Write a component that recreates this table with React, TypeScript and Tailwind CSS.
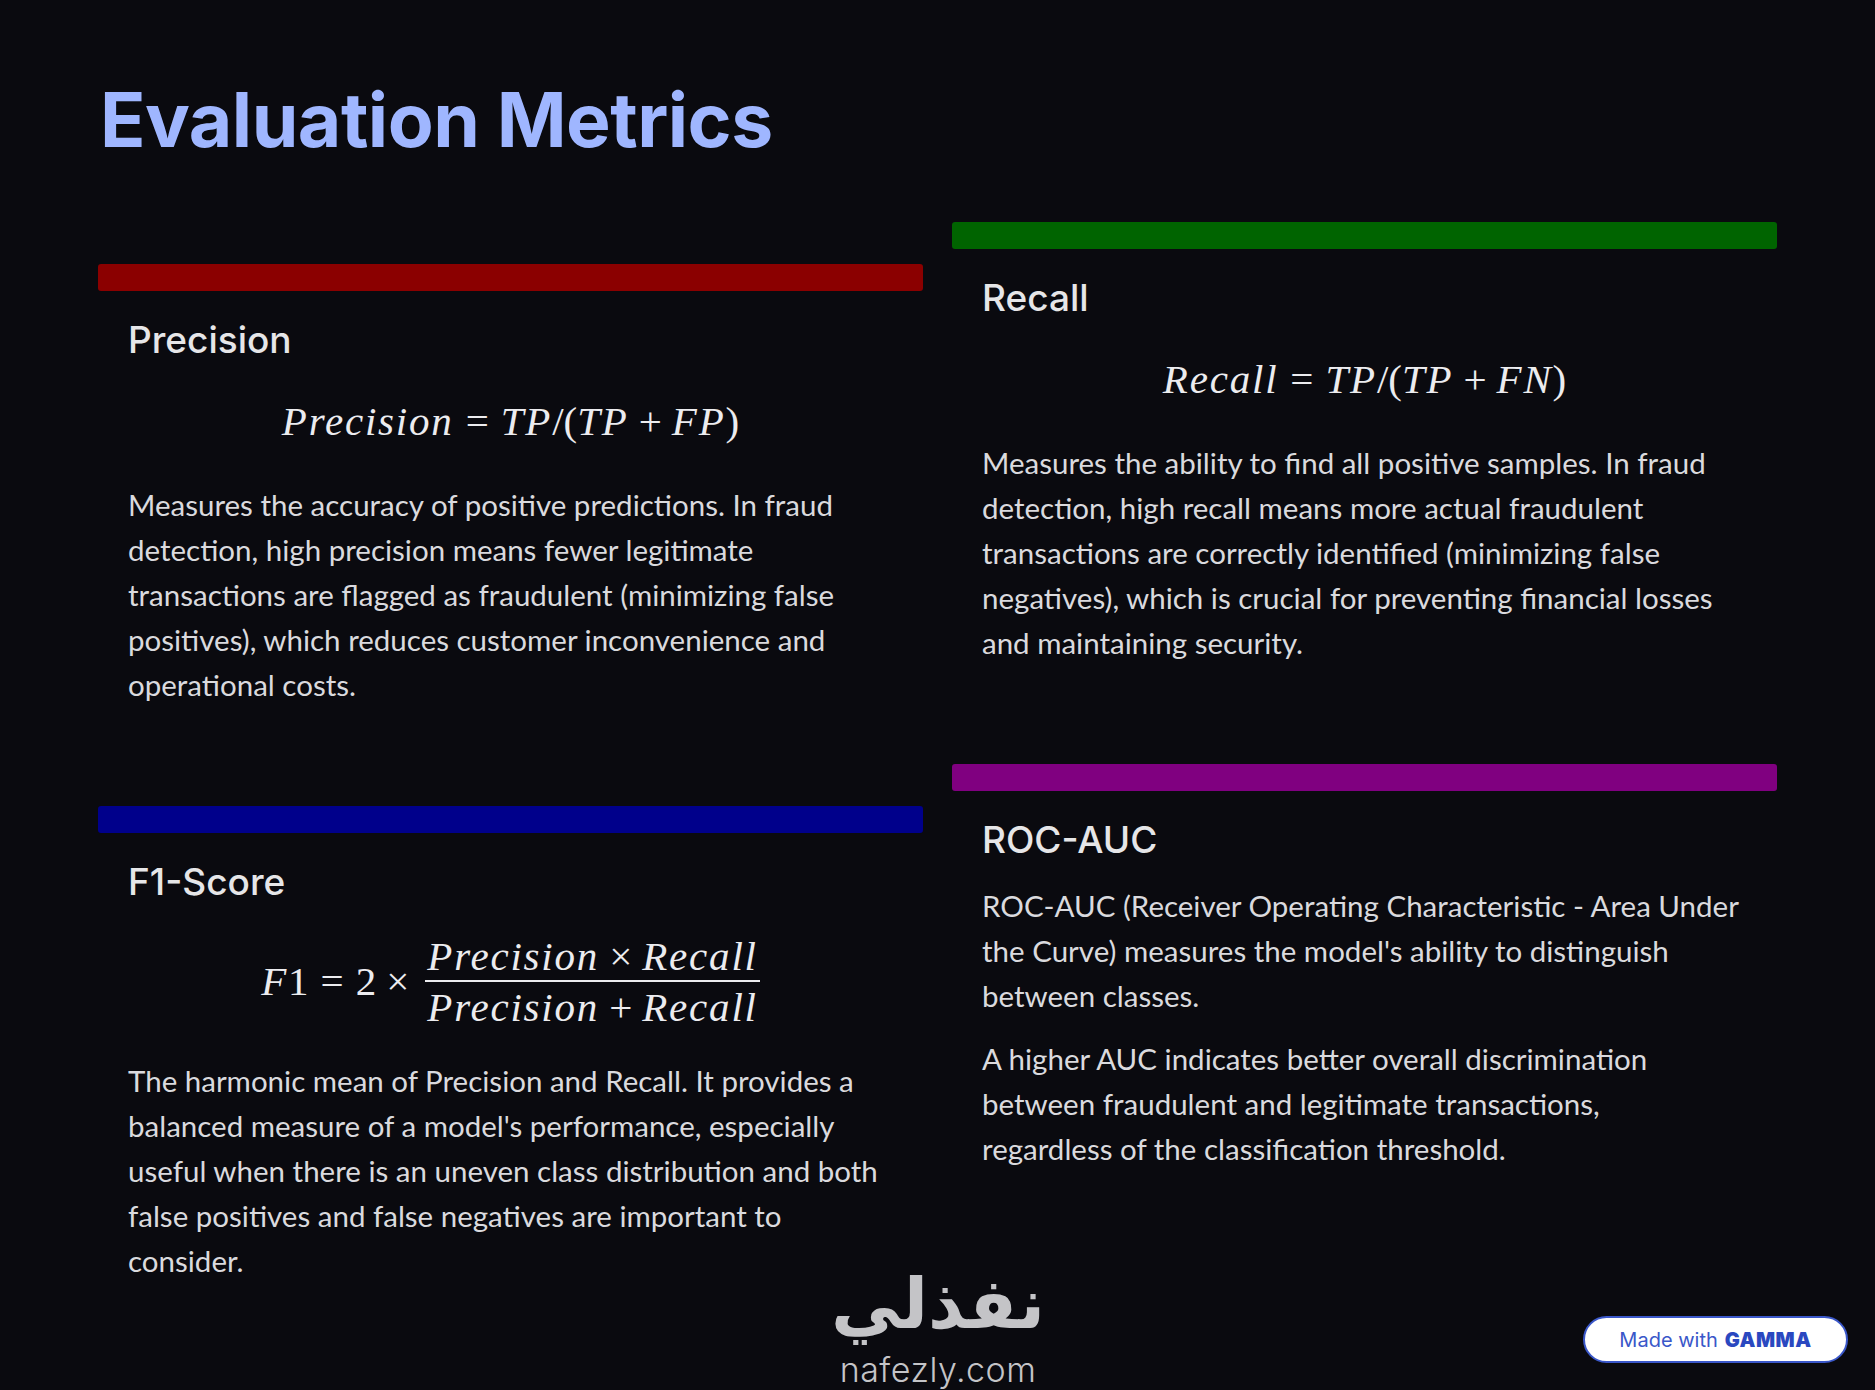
import React from 'react';

const body = { fontFamily: 'Lato, "Open Sans", sans-serif' };
const head = { fontFamily: 'Inter, "Noto Sans", sans-serif' };
const math = { fontFamily: '"Liberation Serif", "DejaVu Serif", serif' };

function V({ children }: { children: React.ReactNode }) {
  return <span className="italic tracking-[1.8px]">{children}</span>;
}

function Op({ children, wide }: { children: React.ReactNode; wide?: boolean }) {
  return <span className={wide ? 'mx-[12px]' : 'mx-[10px]'}>{children}</span>;
}

function MetricCard({
  bar,
  title,
  formula,
  bodyTop = 'mt-0',
  children,
}: {
  bar: string;
  title: string;
  formula?: React.ReactNode;
  bodyTop?: string;
  children: React.ReactNode;
}) {
  return (
    <div>
      <div className={`h-[27px] rounded-[3px] ${bar}`} />
      <div className="px-[30px]">
        <h2 style={head} className="mt-[26px] text-[37px] leading-[46px] font-medium text-[#e6e6e8]">
          {title}
        </h2>
        {formula}
        <div style={body} className={`${bodyTop} text-[29.5px] leading-[45px] text-[#dadade] space-y-[18px]`}>
          {children}
        </div>
      </div>
    </div>
  );
}

function InlineFormula({ children }: { children: React.ReactNode }) {
  return (
    <div style={math} className="text-center text-[41px] leading-[50px] text-[#ececef] mt-[33px] mb-[36px]">
      {children}
    </div>
  );
}

export default function App() {
  return (
    <div className="relative w-[1875px] h-[1390px] bg-[#0a0a0f] overflow-hidden">
      <div className="px-[98px] pt-[80px]">
        <h1 style={head} className="pl-[2px] text-[75px] leading-[80px] font-bold tracking-[-0.5px] text-[#9fb6ff]">
          Evaluation Metrics
        </h1>

        <div className="grid grid-cols-2 gap-x-[29px] mt-[8px]">
          <div className="pt-[96px] space-y-[99px]">
            <MetricCard
              bar="bg-[#8b0000]"
              title="Precision"
              formula={
                <InlineFormula>
                  <V>Precision</V>
                  <Op wide>=</Op>
                  <V>TP</V>/(<V>TP</V>
                  <Op>+</Op>
                  <V>FP</V>)
                </InlineFormula>
              }
            >
              <p>
                Measures the accuracy of positive predictions. In fraud detection, high precision means fewer
                legitimate transactions are flagged as fraudulent (minimizing false positives), which reduces
                customer inconvenience and operational costs.
              </p>
            </MetricCard>

            <MetricCard
              bar="bg-[#00008b]"
              title="F1-Score"
              bodyTop="mt-[28px]"
              formula={
                <div style={math} className="flex items-center justify-center text-[41px] text-[#ececef] mt-[28px]">
                  <span>
                    <V>F</V>1<Op wide>=</Op>2<Op>×</Op>
                  </span>
                  <span className="ml-[6px] flex flex-col items-center">
                    <span className="px-[2px] leading-[46px]">
                      <V>Precision</V>
                      <Op>×</Op>
                      <V>Recall</V>
                    </span>
                    <span className="block w-full h-[2px] bg-[#ececef] mt-[1px] mb-[2px]" />
                    <span className="px-[2px] leading-[46px]">
                      <V>Precision</V>
                      <Op>+</Op>
                      <V>Recall</V>
                    </span>
                  </span>
                </div>
              }
            >
              <p>
                The harmonic mean of Precision and Recall. It provides a balanced measure of a model's
                performance, especially useful when there is an uneven class distribution and both false
                positives and false negatives are important to consider.
              </p>
            </MetricCard>
          </div>

          <div className="pt-[54px] space-y-[99px]">
            <MetricCard
              bar="bg-[#006400]"
              title="Recall"
              formula={
                <InlineFormula>
                  <V>Recall</V>
                  <Op wide>=</Op>
                  <V>TP</V>/(<V>TP</V>
                  <Op>+</Op>
                  <V>FN</V>)
                </InlineFormula>
              }
            >
              <p>
                Measures the ability to find all positive samples. In fraud detection, high recall means more
                actual fraudulent transactions are correctly identified (minimizing false negatives), which is
                crucial for preventing financial losses and maintaining security.
              </p>
            </MetricCard>

            <MetricCard bar="bg-[#800080]" title="ROC-AUC" bodyTop="mt-[20px]">
              <p>
                ROC-AUC (Receiver Operating Characteristic - Area Under the Curve) measures the model's ability to
                distinguish between classes.
              </p>
              <p>
                A higher AUC indicates better overall discrimination between fraudulent and legitimate
                transactions,
                <br />
                regardless of the classification threshold.
              </p>
            </MetricCard>
          </div>
        </div>
      </div>

      {/* watermark */}
      <div className="absolute left-[828px] top-[1268px] w-[220px] flex flex-col items-center text-[#c4c4c7]">
        <div
          style={{ fontFamily: '"DejaVu Sans", "Noto Sans", sans-serif' }}
          className="text-[70px] leading-[72px] font-bold"
          dir="rtl"
        >
          نفذلي
        </div>
        <div style={head} className="mt-[12px] text-[34px] leading-[36px] font-light tracking-[0.5px]">
          nafezly.com
        </div>
      </div>

      {/* made with gamma badge */}
      <div className="absolute left-[1583px] top-[1316px] w-[265px] h-[47px] rounded-full bg-white border-2 border-[#3a57c9] flex items-center justify-center gap-[7px]">
        <span style={head} className="text-[20px] text-[#3a57c9]">
          Made with
        </span>
        <span style={head} className="text-[20px] font-black tracking-[0.5px] text-[#2a48c0]">
          GAMMA
        </span>
      </div>
    </div>
  );
}
